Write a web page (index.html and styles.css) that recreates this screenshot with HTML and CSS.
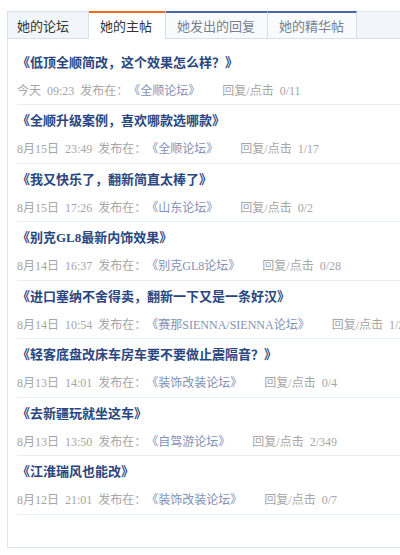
FILE: index.html
```html
<!DOCTYPE html>
<html lang="zh-CN">
<head>
    <meta charset="UTF-8">
    <meta name="viewport" content="width=device-width, initial-scale=1.0">
    <title>她的主帖</title>
    <link rel="stylesheet" href="styles.css">
</head>
<body>
    <div class="board">
        <div class="tabs">
            <div class="tab tab-title">她的论坛</div>
            <div class="tab tab-on">她的主帖</div>
            <div class="tab">她发出的回复</div>
            <div class="tab">她的精华帖</div>
            <div class="tab-rest"></div>
        </div>

        <ul class="posts">
            <li class="post">
                <div class="post-title">《低顶全顺简改，这个效果怎么样？》</div>
                <div class="post-meta">今天 09:23 发布在：<span class="forum">《全顺论坛》</span><span class="count">回复/点击 0/11</span></div>
            </li>
            <li class="post">
                <div class="post-title">《全顺升级案例，喜欢哪款选哪款》</div>
                <div class="post-meta">8月15日 23:49 发布在：<span class="forum">《全顺论坛》</span><span class="count">回复/点击 1/17</span></div>
            </li>
            <li class="post">
                <div class="post-title">《我又快乐了，翻新简直太棒了》</div>
                <div class="post-meta">8月15日 17:26 发布在：<span class="forum">《山东论坛》</span><span class="count">回复/点击 0/2</span></div>
            </li>
            <li class="post">
                <div class="post-title">《别克GL8最新内饰效果》</div>
                <div class="post-meta">8月14日 16:37 发布在：<span class="forum">《别克GL8论坛》</span><span class="count">回复/点击 0/28</span></div>
            </li>
            <li class="post">
                <div class="post-title">《进口塞纳不舍得卖，翻新一下又是一条好汉》</div>
                <div class="post-meta">8月14日 10:54 发布在：<span class="forum">《赛那SIENNA/SIENNA论坛》</span><span class="count">回复/点击 1/24</span></div>
            </li>
            <li class="post">
                <div class="post-title">《轻客底盘改床车房车要不要做止震隔音？》</div>
                <div class="post-meta">8月13日 14:01 发布在：<span class="forum">《装饰改装论坛》</span><span class="count">回复/点击 0/4</span></div>
            </li>
            <li class="post">
                <div class="post-title">《去新疆玩就坐这车》</div>
                <div class="post-meta">8月13日 13:50 发布在：<span class="forum">《自驾游论坛》</span><span class="count">回复/点击 2/349</span></div>
            </li>
            <li class="post">
                <div class="post-title">《江淮瑞风也能改》</div>
                <div class="post-meta">8月12日 21:01 发布在：<span class="forum">《装饰改装论坛》</span><span class="count">回复/点击 0/7</span></div>
            </li>
        </ul>
    </div>
</body>
</html>
```

FILE: styles.css
```css
html, body {
    overflow: hidden;
}
body {
    margin: 0;
    padding: 11px 0 0 7px;
    background: #fff;
    font-family: "Liberation Serif", "Noto Sans CJK SC", serif;
    color: #333;
    text-spacing-trim: space-all;
}
.board {
    width: 440px;
}
.tabs {
    display: flex;
    height: 28px;
}
.tab {
    box-sizing: border-box;
    height: 28px;
    padding: 0 12px 0 11px;
    line-height: 26px;
    font-size: 13px;
    font-family: "Noto Sans CJK SC", sans-serif;
    color: #778093;
    background: #f9fafc;
    border-top: 2px solid #4a68a5;
    border-right: 1px solid #d8deea;
    border-bottom: 1px solid #d8deea;
    white-space: nowrap;
}
.tab-title {
    padding: 0 19px 0 9px;
    color: #333;
    background: #f2f5f9;
    border-top: 1px solid #d8deea;
    border-left: 1px solid #d8deea;
    line-height: 27px;
}
.tab-on {
    padding-right: 13px;
    color: #333;
    background: #fff;
    border-top: 2px solid #f26a1b;
    border-bottom: none;
}
.tab-rest {
    flex: 1;
    box-sizing: border-box;
    height: 28px;
    background: #f2f5f9;
    border-top: 1px solid #dde3ee;
    border-bottom: 1px solid #d8deea;
}
.posts {
    list-style: none;
    margin: 0;
    padding: 7.5px 0 32.5px 9px;
    border-left: 1px solid #dfe4ee;
    border-bottom: 1px solid #dfe4ee;
}
.post {
    border-bottom: 1px solid #e9edf4;
    white-space: nowrap;
}
.post-title {
    height: 31px;
    line-height: 31px;
    font-size: 13px;
    font-weight: bold;
    color: #2a4680;
}
.post-meta {
    height: 26.5px;
    line-height: 26.5px;
    font-size: 12px;
    color: #a6a6a6;
    word-spacing: 3px;
}
.forum {
    color: #8491b5;
}
.count {
    margin-left: 22px;
}
```
